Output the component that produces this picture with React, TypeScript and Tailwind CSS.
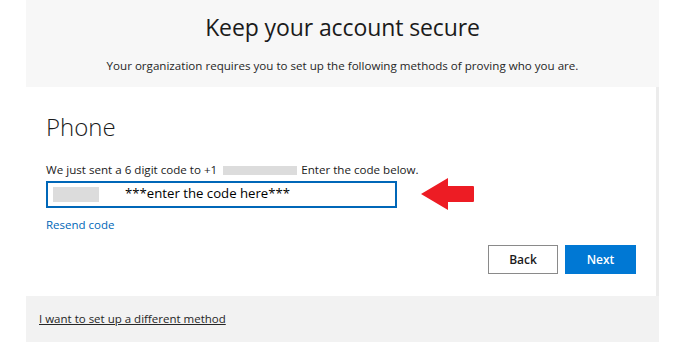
const font = { fontFamily: '"Open Sans", "Liberation Sans", sans-serif' }

const Blank = ({ w, h }: { w: number; h: number }) => (
  <span className="inline-block bg-[#dcdcdc] align-middle" style={{ width: w, height: h }} />
)

export default function App() {
  return (
    <div className="w-[685px] h-[364px] bg-white overflow-hidden" style={font}>
      <div className="ml-[26px] w-[633px]">
        <header className="h-[87px] bg-[#f7f7f7] flex flex-col items-center pt-[12px]">
          <h1 className="text-[23px] leading-[30px] text-[#1b1b1b] tracking-[-0.1px]">Keep your account secure</h1>
          <p className="mt-[17px] text-[11.6px] leading-[14px] text-[#262626]">
            Your organization requires you to set up the following methods of proving who you are.
          </p>
        </header>

        <section className="h-[209px] bg-white border-r-[3px] border-[#ececec] pl-[20px] pr-[20px] pt-[24px]">
          <h2 className="text-[24px] leading-[32px] font-light text-[#1b1b1b]">Phone</h2>
          <p className="mt-[20px] text-[11.6px] leading-[14px] text-[#1b1b1b] flex items-center">
            We just sent a 6 digit code to +1
            <span className="ml-[6px] mr-[4px]"><Blank w={74} h={9} /></span>
            Enter the code below.
          </p>
          <div className="flex items-center">
            <div className="w-[351px] h-[27px] border-2 border-[#0067b8] flex items-center pl-[5px]">
              <Blank w={46} h={15} />
              <span className="ml-[26px] text-[13.2px] text-black">***enter the code here***</span>
            </div>
            <svg className="ml-[24px]" width="54" height="34" viewBox="0 0 54 34">
              <path d="M0 17 L27 1 L27 9 L52 9 Q53 9 53 10 L53 24 Q53 25 52 25 L27 25 L27 33 Z" fill="#ed1c24" />
            </svg>
          </div>
          <a className="mt-[7px] block text-[11.5px] leading-[14px] text-[#0067b8]">Resend code</a>
          <div className="mt-[13px] flex justify-end gap-[7px]">
            <button className="w-[70px] h-[29px] bg-white border border-[#8a8a8a] text-[12px] font-semibold text-[#1b1b1b]">
              Back
            </button>
            <button className="w-[71px] h-[29px] bg-[#0078d4] text-[12px] font-semibold text-white">Next</button>
          </div>
        </section>

        <footer className="h-[46px] bg-[#f2f2f2] flex items-center pl-[13px]">
          <a className="text-[11.5px] text-[#262626] underline">I want to set up a different method</a>
        </footer>
      </div>
    </div>
  )
}
